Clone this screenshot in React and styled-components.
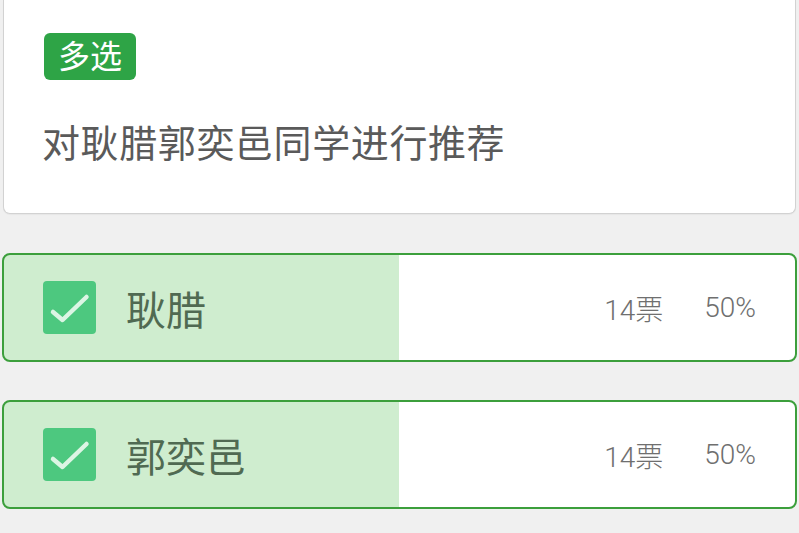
import React from "react";
import styled, { createGlobalStyle } from "styled-components";

const GlobalStyle = createGlobalStyle`
    html, body {
        margin: 0;
        padding: 0;
        background-color: #f0f0f0;
        font-family: Roboto, "Noto Sans CJK SC", sans-serif;
    }
`

const Page = styled.div`
    padding: 0 2px;
    height: 533px;
    overflow: hidden;
    box-sizing: border-box;
`

const QuestionCard = styled.section`
    margin: 0 1px;
    background-color: #fff;
    border: 1.5px solid #d2d2d2;
    border-top: none;
    border-radius: 0 0 7px 7px;
    padding: 33px 40px 46px;
    box-shadow: 0 1px 1px rgba(0, 0, 0, 0.04);
`

const TypeTag = styled.span`
    display: inline-flex;
    align-items: center;
    height: 47px;
    padding: 0 14px;
    border-radius: 6px;
    background-color: #2ea446;
    color: #fff;
    font-size: 32px;
    line-height: 1;
`

const QuestionText = styled.p`
    margin: 41px 0 0 -2px;
    font-size: 38px;
    line-height: 46px;
    color: #5a5a5a;
    letter-spacing: 0.6px;
`

const OptionList = styled.div`
    display: flex;
    flex-direction: column;
    gap: 38px;
    margin-top: 39px;
`

const Option = styled.div`
    display: flex;
    align-items: center;
    height: 109px;
    box-sizing: border-box;
    padding: 0 39px;
    border: 2px solid #3c9f3c;
    border-radius: 8px;
    background: ${p => `linear-gradient(to right, #cfedcf ${p.$percent}%, #fff ${p.$percent}%)`};
`

const CheckBox = styled.span`
    display: flex;
    width: 53px;
    height: 53px;
    flex-shrink: 0;
    border-radius: 4px;
    background-color: #4dc87f;
`

const OptionLabel = styled.span`
    margin-left: 30px;
    flex: 1;
    font-size: 40px;
    color: #506a52;
`

const Votes = styled.span`
    font-size: 28px;
    font-weight: 300;
    color: #6f6f6f;
`

const Percent = styled.span`
    margin-left: 41px;
    font-size: 28px;
    font-weight: 300;
    color: #6f6f6f;
`

const options = [
    { name: "耿腊", votes: 14, percent: 50 },
    { name: "郭奕邑", votes: 14, percent: 50 },
]

function Check() {
    return (
        <CheckBox>
            <svg width="53" height="53" viewBox="0 0 53 53">
                <path d="M10 31 L19.5 39 L43.5 16" fill="none" stroke="#dcf5e4" strokeWidth="4.5" strokeLinecap="round" strokeLinejoin="round" />
            </svg>
        </CheckBox>
    )
}

export default function App() {
    return (
        <Page>
            <GlobalStyle />
            <QuestionCard>
                <TypeTag>多选</TypeTag>
                <QuestionText>对耿腊郭奕邑同学进行推荐</QuestionText>
            </QuestionCard>
            <OptionList>
                {options.map(o => (
                    <Option key={o.name} $percent={o.percent}>
                        <Check />
                        <OptionLabel>{o.name}</OptionLabel>
                        <Votes>{o.votes}票</Votes>
                        <Percent>{o.percent}%</Percent>
                    </Option>
                ))}
            </OptionList>
        </Page>
    )
}
